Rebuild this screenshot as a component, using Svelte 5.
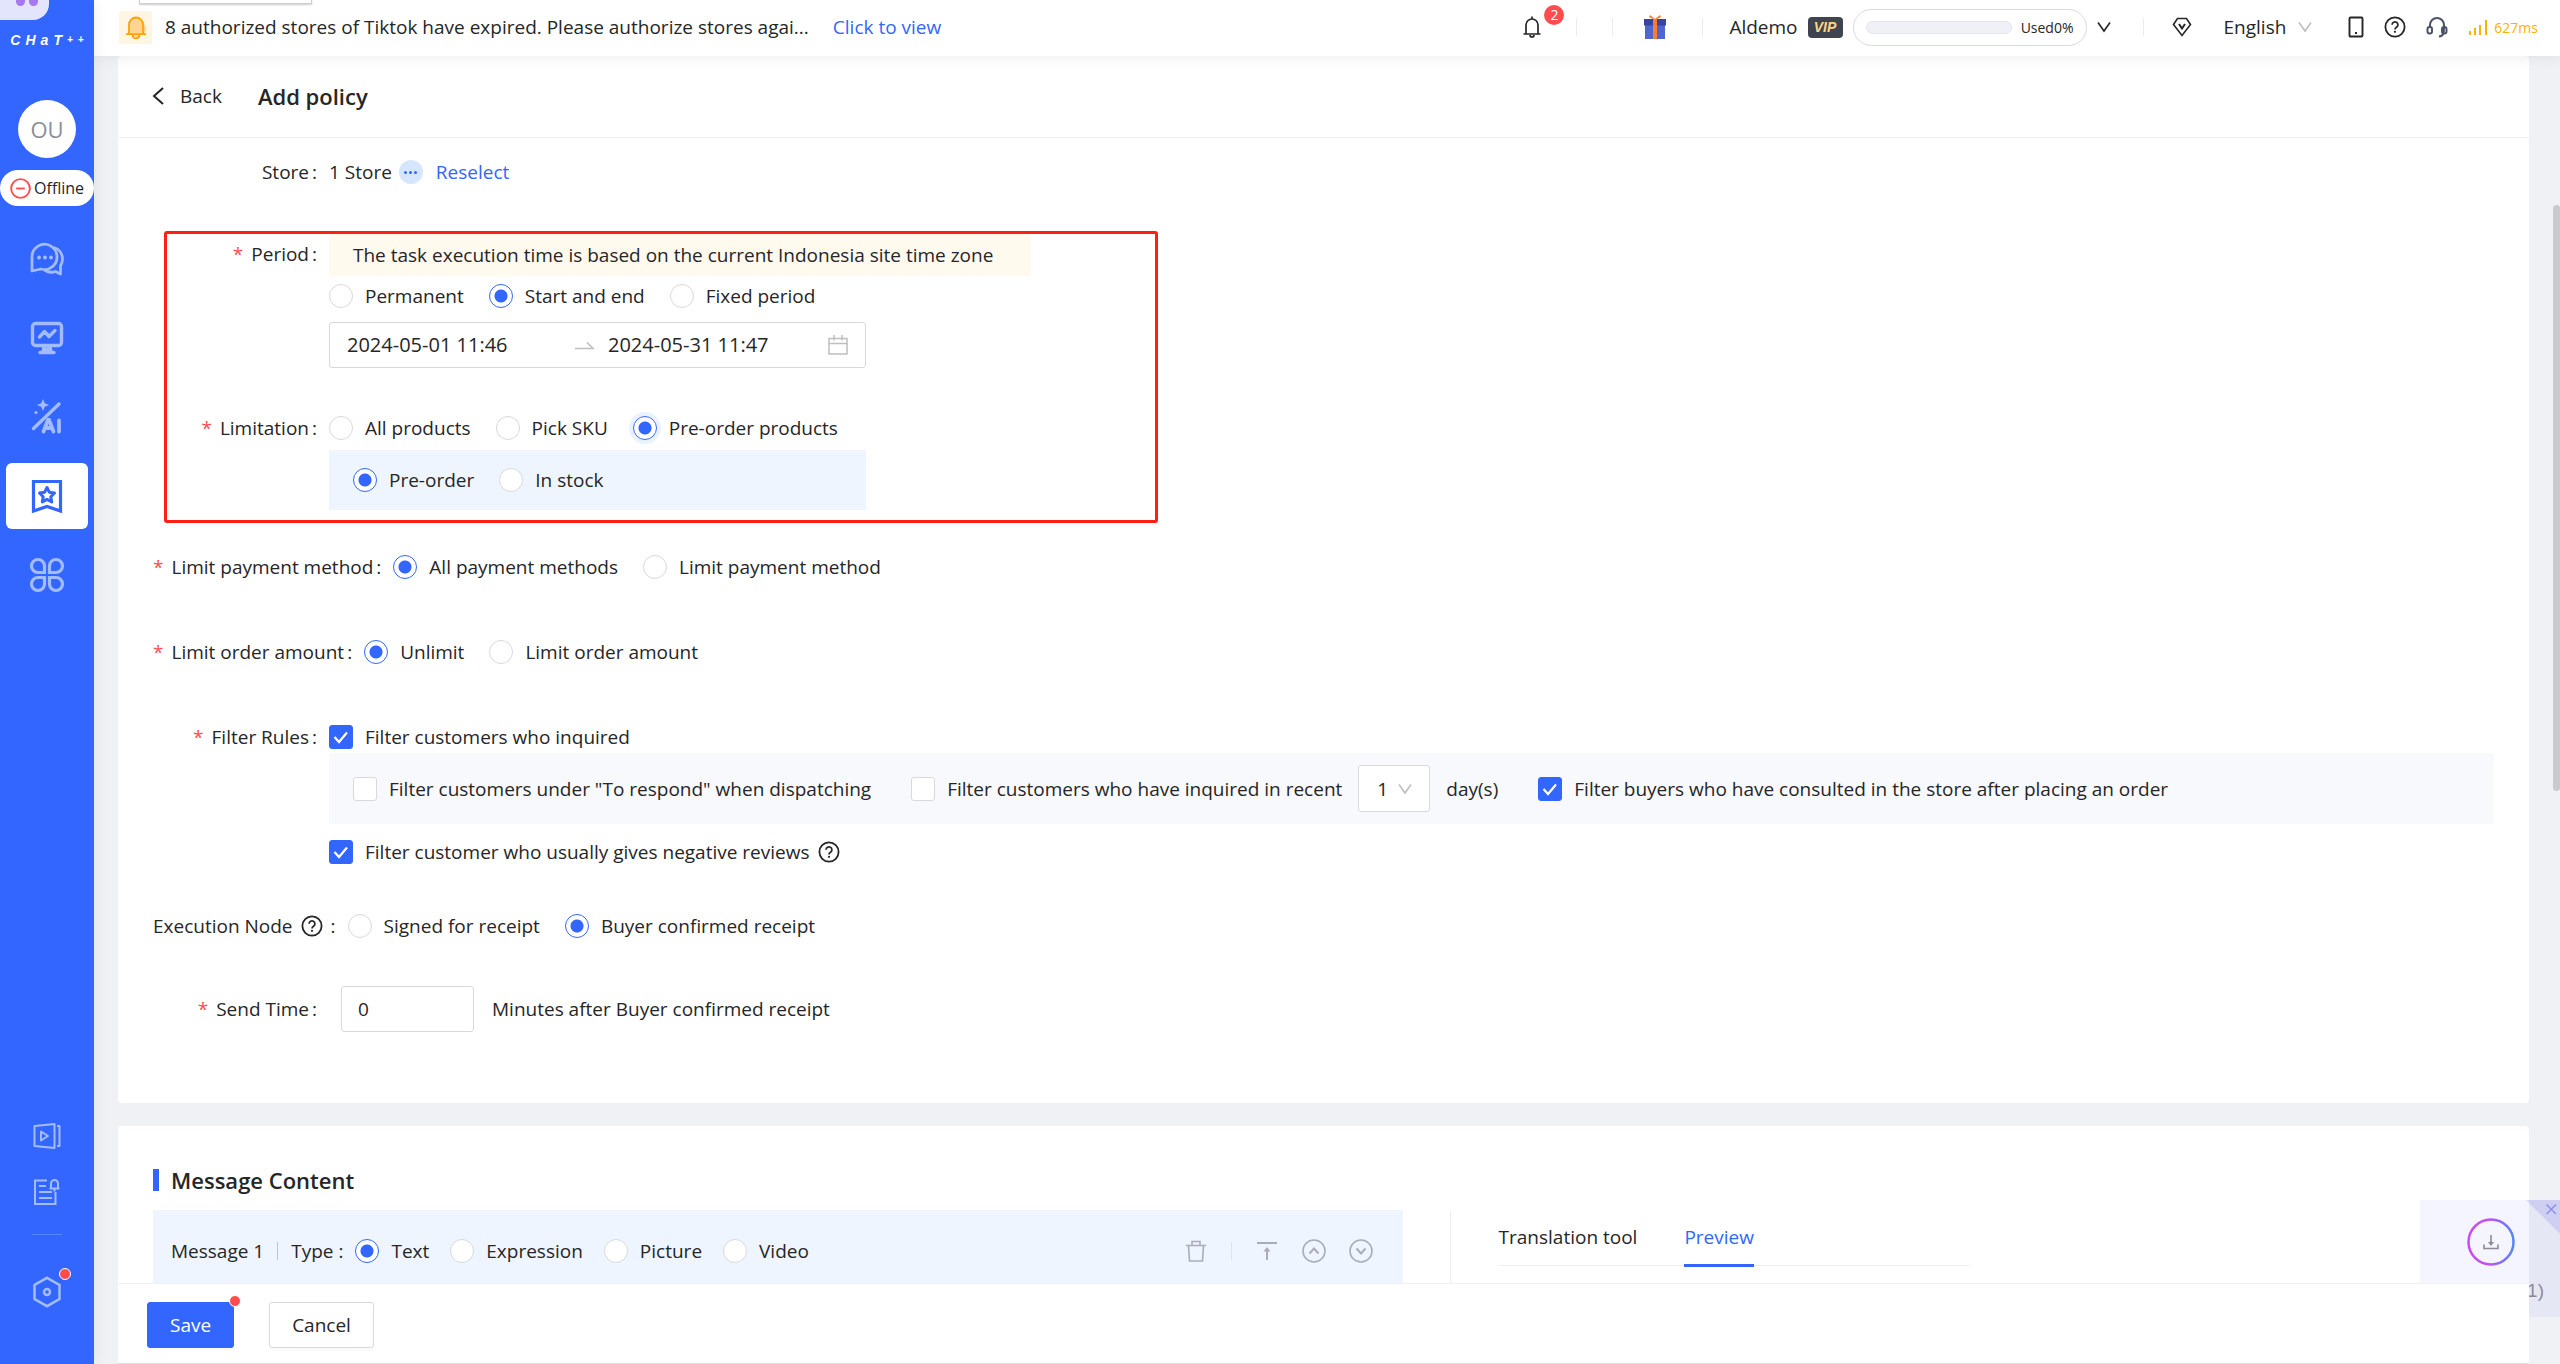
<script lang="ts">
  let period = $state('range');
  let limitation = $state('preorder');
  let stock = $state('preorder');
  let payment = $state('all');
  let amount = $state('unlimit');
  let node = $state('confirmed');
  let messageType = $state('Text');

  let startTime = $state('2024-05-01 11:46');
  let endTime = $state('2024-05-31 11:47');
  let delay = $state('0');
  let days = $state('1');

  let filterInquired = $state(true);
  let filterDispatch = $state(false);
  let filterRecent = $state(false);
  let filterConsulted = $state(true);
  let filterNegative = $state(true);

  const messageTypes = ['Text', 'Expression', 'Picture', 'Video'];
</script>

{#snippet help()}
  <svg class="help" viewBox="0 0 22 22" aria-hidden="true">
    <circle cx="11" cy="11" r="9.6" fill="none" stroke="currentColor" stroke-width="1.8" />
    <path d="M8.1 8.8a2.9 2.9 0 1 1 4.4 2.5c-1 .6-1.5 1.1-1.5 2.1" fill="none" stroke="currentColor" stroke-width="1.7" />
    <circle cx="11" cy="15.8" r="1.1" fill="currentColor" />
  </svg>
{/snippet}

{#snippet chevron()}
  <svg class="chevron" viewBox="0 0 14 12" aria-hidden="true">
    <path d="M1 1.5l6 8.5 6-8.5" fill="none" stroke="currentColor" stroke-width="1.6" />
  </svg>
{/snippet}

<div class="app">
  <aside class="sidebar">
    <div class="mascot"><i></i><i></i></div>
    <div class="logo"><span>C</span><span>H</span><span>a</span><span>T</span><small>+</small><small>+</small></div>
    <div class="avatar">OU</div>
    <button class="status">
      <svg viewBox="0 0 22 22" aria-hidden="true">
        <circle cx="11" cy="11" r="9.8" fill="none" stroke="#ff4d4f" stroke-width="2" />
        <path d="M6.5 11h9" stroke="#ff4d4f" stroke-width="2" />
      </svg>
      Offline
    </button>

    <nav class="menu">
      <a href="#chat" aria-label="Chat">
        <svg viewBox="0 0 36 36" fill="none" stroke="currentColor" stroke-width="2.800" stroke-linejoin="round">
          <path d="M3 30V16a12.500 12.500 0 1 1 19 10.500c-3 2.500-7 2.500-10 1.500z" />
          <path d="M25 6.500c5 1.500 8.500 6 8.500 11.500 0 3-1 5-2 7V33l-5-2.500c-4 1.500-8 .5-11-1.500" />
          <g fill="currentColor" stroke="none"><circle cx="10" cy="16.500" r="1.900" /><circle cx="16" cy="16.500" r="1.900" /><circle cx="22" cy="16.500" r="1.900" /></g>
        </svg>
      </a>
      <a href="#data" aria-label="Data">
        <svg viewBox="0 0 36 36" fill="none" stroke="currentColor" stroke-width="3.400" stroke-linecap="round" stroke-linejoin="round">
          <rect x="3.500" y="3.500" width="29" height="22" rx="3" />
          <path d="M10.500 17l5-5.500 4.500 5 6-6M15 27l-1 5M21 27l1 5M11 32.500h14M15 29h6" />
        </svg>
      </a>
      <a href="#ai" aria-label="AI">
        <svg viewBox="0 0 36 36" fill="none" stroke="currentColor" stroke-width="3.400" stroke-linecap="round">
          <path d="M4.500 29.500L30 5" />
          <path d="M14 0l1.800 4.200L20 6l-4.200 1.800L14 12l-1.800-4.200L8 6l4.200-1.800z" fill="currentColor" stroke="none" />
          <circle cx="7" cy="13.500" r="1.600" fill="currentColor" stroke="none" />
          <path d="M14.500 32.500l4.500-11.500h1L24.500 32.500M17 29h6M30 21.500v11" stroke-width="3.800" />
        </svg>
      </a>
      <a href="#policy" class="active" aria-label="Marketing">
        <svg viewBox="0 0 36 36" fill="none" stroke="currentColor" stroke-width="3.200">
          <path d="M4.500 3.500h27v29.500L18 28.500 4.500 33z" />
          <path d="M18 9.500l2.300 4.700 5.200.8-3.700 3.700.9 5.200-4.700-2.500-4.700 2.500.9-5.200-3.700-3.700 5.200-.8z" stroke-width="3" stroke-linejoin="round" />
        </svg>
      </a>
      <a href="#apps" aria-label="Apps">
        <svg viewBox="0 0 36 36" fill="none" stroke="currentColor" stroke-width="3.200">
          <path d="M9 2.500a6.500 6.500 0 0 1 6.500 6.500v6.500H9a6.500 6.500 0 0 1 0-13zM27 2.500a6.500 6.500 0 0 1 0 13h-6.500V9A6.500 6.500 0 0 1 27 2.500zM9 20.500h6.500V27A6.500 6.500 0 1 1 9 20.500zM20.500 20.500H27a6.500 6.500 0 1 1-6.500 6.500z" />
        </svg>
      </a>
    </nav>

    <div class="tools">
      <a href="#video" aria-label="Tutorials">
        <svg viewBox="0 0 28 28" fill="none" stroke="currentColor" stroke-width="2" stroke-linejoin="round">
          <path d="M1.500 4l20-2v24l-20-2zM24 4h2.500v20H24M8 9.500v9l7-4.500z" />
        </svg>
      </a>
      <a href="#log" aria-label="Log">
        <svg viewBox="0 0 28 28" fill="none" stroke="currentColor" stroke-width="2">
          <path d="M14 2.500H2v23.500h20.500V14M6 8h7M6 14h13M6 20h13M16.500 10.500h10M18 10.500V5.500a3.500 3.500 0 0 1 7 0v5M20.500 12.500h2" />
        </svg>
      </a>
      <hr />
      <a href="#settings" class="settings" aria-label="Settings">
        <svg viewBox="0 0 32 32" fill="none" stroke="currentColor" stroke-width="2.500">
          <path d="M16 1.800l12.500 7.100v14.200L16 30.200 3.500 23.100V8.900z" />
          <circle cx="16" cy="16" r="3" />
        </svg>
        <b class="dot"></b>
      </a>
    </div>
  </aside>

  <div class="main">
    <header class="topbar">
      <div class="drop-edge"></div>
      <div class="notice">
        <span class="bell-tile">
          <svg viewBox="0 0 24 24" aria-hidden="true">
            <path d="M8 19V9.500A6 6 0 0 1 20 9.500c3 2 3 6 0 9z" fill="#ffd591" />
            <path d="M5 19V9.500a7 7 0 0 1 14 0V19M2 19.200h20M8.500 20a3.500 3.500 0 0 0 7 0" fill="#ffd591" stroke="#faa30a" stroke-width="1.800" />
          </svg>
        </span>
        <span class="notice-text">8 authorized stores of Tiktok have expired. Please authorize stores agai...</span>
        <a href="#view">Click to view</a>
      </div>

      <div class="top-actions">
        <button class="bell" aria-label="Notifications">
          <svg viewBox="0 0 20 22" fill="none" stroke="currentColor" stroke-width="1.700">
            <path d="M4 18V9a6 6 0 0 1 12 0v9M1.500 18h17M10 .5v2.500M8 19a2 2 0 0 0 4 0" />
          </svg>
          <b class="count">2</b>
        </button>
        <i class="sep first"></i>
        <i class="sep second"></i>
        <svg class="gift" viewBox="0 0 24 24" aria-hidden="true">
          <path d="M2 10h20v14H2z" fill="#4f66cf" />
          <path d="M1 4h22v6.500H1z" fill="#3a43a0" />
          <path d="M10 4h4v20h-4z" fill="#ff7b2e" />
          <path d="M11 4.500L6 2l1-2 5 4 5-4 1 2-5 2.500z" fill="#ff7b2e" />
        </svg>
        <i class="sep third"></i>
        <span class="user">Aldemo</span>
        <span class="vip">VIP</span>
        <div class="usage"><div class="bar"></div>Used0%</div>
        <button class="icon-btn" aria-label="More">{@render chevron()}</button>
        <i class="sep fourth"></i>
        <svg class="gem" viewBox="0 0 20 20" fill="none" stroke="currentColor" stroke-width="1.600">
          <path d="M5.500 1.500h9l4 6L10 18.500 1.500 7.500z" /><path d="M7 7l3 4.500L13 7" stroke-width="2" />
        </svg>
        <button class="language">English {@render chevron()}</button>
        <svg class="phone" viewBox="0 0 16 22" fill="none" stroke="currentColor" stroke-width="1.900">
          <rect x="1.500" y="1.500" width="13" height="19" rx="1" /><path d="M7 17h2" />
        </svg>
        {@render help()}
        <svg class="headset" viewBox="0 0 22 22" fill="none" stroke="#4a5468" stroke-width="2">
          <path d="M4 12V9a7 7 0 0 1 14 0v3c0 4 0 8-5 8.500" />
          <rect x="1.500" y="11" width="4.500" height="6.500" rx="2" /><rect x="16" y="11" width="4.500" height="6.500" rx="2" />
        </svg>
        <span class="ping">
          <svg viewBox="0 0 20 15" stroke="#ffb100" stroke-width="2" aria-hidden="true">
            <path d="M2 15v-4M7 15V8M12 15V5" /><path d="M18 15V0" />
          </svg>
          627ms
        </span>
      </div>
    </header>

    <div class="content">
      <section class="panel">
        <div class="page-head">
          <button class="back">
            <svg viewBox="0 0 12 18" fill="none" stroke="currentColor" stroke-width="2"><path d="M11 1L2 9l9 8" /></svg>
            Back
          </button>
          <h1>Add policy</h1>
        </div>

        <form class="form">
          <div class="row">
            <span class="label">Store<i class="colon">:</i></span>
            <div class="inline">
              1 Store
              <button type="button" class="more" aria-label="Show stores"><i></i><i></i><i></i></button>
              <a href="#stores">Reselect</a>
            </div>
          </div>

          <div class="marked">
            <div class="row tall">
              <span class="label required">Period<i class="colon">:</i></span>
              <div class="field">
                <p class="banner">The task execution time is based on the current Indonesia site time zone</p>
                <div class="options">
                  <label><input type="radio" value="permanent" bind:group={period} />Permanent</label>
                  <label><input type="radio" value="range" bind:group={period} />Start and end</label>
                  <label><input type="radio" value="fixed" bind:group={period} />Fixed period</label>
                </div>
                <div class="range">
                  <input type="text" aria-label="Start time" bind:value={startTime} />
                  <svg class="arrow" viewBox="0 0 20 10" fill="none" stroke="currentColor" stroke-width="1.600"><path d="M0 8.500h18l-6-6" /></svg>
                  <input type="text" aria-label="End time" bind:value={endTime} />
                  <svg class="calendar" viewBox="0 0 20 20" fill="none" stroke="currentColor" stroke-width="1.500">
                    <path d="M1 3.500h18V19H1zM1 8.500h18M6 0v5.500M14 0v5.500" />
                  </svg>
                </div>
              </div>
            </div>

            <div class="row tall limitation">
              <span class="label required">Limitation<i class="colon">:</i></span>
              <div class="field">
                <div class="options">
                  <label><input type="radio" value="all" bind:group={limitation} />All products</label>
                  <label><input type="radio" value="sku" bind:group={limitation} />Pick SKU</label>
                  <label><input type="radio" class="focused" value="preorder" bind:group={limitation} />Pre-order products</label>
                </div>
                <div class="options nested">
                  <label><input type="radio" value="preorder" bind:group={stock} />Pre-order</label>
                  <label><input type="radio" value="instock" bind:group={stock} />In stock</label>
                </div>
              </div>
            </div>
          </div>

          <div class="row payment">
            <span class="label required">Limit payment method<i class="colon">:</i></span>
            <div class="options">
              <label><input type="radio" value="all" bind:group={payment} />All payment methods</label>
              <label><input type="radio" value="limit" bind:group={payment} />Limit payment method</label>
            </div>
          </div>

          <div class="row spaced">
            <span class="label required">Limit order amount<i class="colon">:</i></span>
            <div class="options">
              <label><input type="radio" value="unlimit" bind:group={amount} />Unlimit</label>
              <label><input type="radio" value="limit" bind:group={amount} />Limit order amount</label>
            </div>
          </div>

          <div class="row spaced">
            <span class="label required">Filter Rules<i class="colon">:</i></span>
            <div class="field grow">
              <div class="options">
                <label><input type="checkbox" bind:checked={filterInquired} />Filter customers who inquired</label>
              </div>
              <div class="filters">
                <label><input type="checkbox" bind:checked={filterDispatch} />Filter customers under "To respond" when dispatching</label>
                <div class="recent">
                  <label><input type="checkbox" bind:checked={filterRecent} />Filter customers who have inquired in recent</label>
                  <span class="select">
                    <select aria-label="Days" bind:value={days}>
                      <option>1</option>
                      <option>3</option>
                      <option>7</option>
                    </select>
                    {@render chevron()}
                  </span>
                  <span>day(s)</span>
                </div>
                <label><input type="checkbox" bind:checked={filterConsulted} />Filter buyers who have consulted in the store after placing an order</label>
              </div>
              <div class="options negative">
                <label><input type="checkbox" bind:checked={filterNegative} />Filter customer who usually gives negative reviews</label>
                {@render help()}
              </div>
            </div>
          </div>

          <div class="row node">
            <span class="label with-help">Execution Node {@render help()} <span>:</span></span>
            <div class="options">
              <label><input type="radio" value="signed" bind:group={node} />Signed for receipt</label>
              <label><input type="radio" value="confirmed" bind:group={node} />Buyer confirmed receipt</label>
            </div>
          </div>

          <div class="row send">
            <label class="label required" for="delay">Send Time<i class="colon">:</i></label>
            <input id="delay" class="delay" type="text" bind:value={delay} />
            <span>Minutes after Buyer confirmed receipt</span>
          </div>
        </form>
      </section>

      <section class="panel message">
        <h2>Message Content</h2>
        <div class="columns">
          <div class="message-head">
            <span>Message 1</span>
            <i class="bar-sep"></i>
            <span class="type">Type :</span>
            <div class="options types">
              {#each messageTypes as type}
                <label><input type="radio" value={type} bind:group={messageType} />{type}</label>
              {/each}
            </div>
            <div class="message-tools">
              <button aria-label="Delete">
                <svg viewBox="0 0 24 24" fill="none" stroke="currentColor" stroke-width="1.600"><path d="M2 6.500h20M4.500 6.500l1 15.500h13l1-15.500M8 6V2.500h8V6" /></svg>
              </button>
              <i class="bar-sep light"></i>
              <button aria-label="Move to top">
                <svg viewBox="0 0 24 24" fill="none" stroke="currentColor" stroke-width="2"><path d="M2 4h20M12 21V9" /><path d="M8.500 12.500L12 8l3.500 4.500z" fill="currentColor" stroke="none" /></svg>
              </button>
              <button aria-label="Move up">
                <svg viewBox="0 0 24 24" fill="none" stroke="currentColor" stroke-width="1.600"><circle cx="12" cy="12" r="11" /><path d="M7.500 14.500l4.500-5 4.500 5" stroke-width="2" /></svg>
              </button>
              <button aria-label="Move down">
                <svg viewBox="0 0 24 24" fill="none" stroke="currentColor" stroke-width="1.600"><circle cx="12" cy="12" r="11" /><path d="M7.500 9.500l4.500 5 4.500-5" stroke-width="2" /></svg>
              </button>
            </div>
          </div>
          <div class="side">
            <div class="tabs">
              <button>Translation tool</button>
              <button class="current">Preview</button>
            </div>
          </div>
        </div>
      </section>
    </div>

    <div class="download">
      <svg class="ring" viewBox="0 0 48 48" fill="none" aria-hidden="true">
        <defs>
          <linearGradient id="ring" x1="0" y1="0" x2="1" y2="0">
            <stop offset="0.4" stop-color="#c84cf2" />
            <stop offset="1" stop-color="#5585ff" />
          </linearGradient>
        </defs>
        <circle cx="24" cy="24" r="22.500" stroke="url(#ring)" stroke-width="2.500" />
        <path d="M17 26.500v4h14v-4M24 17v9" stroke="#8b8b98" stroke-width="1.600" />
        <path d="M21 24h6l-3 4z" fill="#8b8b98" />
      </svg>
      <button class="close" aria-label="Close">
        <svg viewBox="0 0 34 34" fill="none">
          <path d="M0 0h34v34z" fill="#6a6ae6" fill-opacity="0.180" />
          <path d="M20.500 4.500l9.500 9.500M30 4.500L20.500 14" stroke="#8d8df0" stroke-width="1.400" />
        </svg>
      </button>
      <span class="total">1)</span>
    </div>

    <div class="scrollbar"></div>

    <footer class="footer">
      <button class="primary">Save<b class="dot"></b></button>
      <button>Cancel</button>
    </footer>
  </div>
</div>

<style>
  :global(body) {
    margin: 0;
    font-family: 'Open Sans', 'Noto Sans', sans-serif;
    font-size: 19px;
    color: #262626;
  }

  .app {
    display: flex;
    height: 100vh;
    overflow: hidden;
    background: #f0f1f5;
  }

  * {
    box-sizing: border-box;
  }

  button {
    font: inherit;
    color: inherit;
    background: none;
    border: none;
    padding: 0;
    cursor: pointer;
  }

  a {
    color: #3366ff;
    text-decoration: none;
  }

  svg {
    display: block;
    flex: none;
  }

  .help {
    width: 22px;
    height: 22px;
  }

  .chevron {
    width: 14px;
    height: 12px;
  }

  /* sidebar */
  .sidebar {
    position: relative;
    z-index: 3;
    flex: none;
    width: 94px;
    display: flex;
    flex-direction: column;
    align-items: center;
    background: #3366ff;
    box-shadow: 2px 0 12px rgba(0, 0, 0, 0.06);
  }

  .mascot {
    align-self: flex-start;
    display: flex;
    justify-content: center;
    gap: 4px;
    width: 49px;
    height: 20px;
    padding-left: 5px;
    overflow: hidden;
    background: #e2e5fb;
    border-bottom-right-radius: 16px;
  }

  .mascot i {
    width: 9px;
    height: 6px;
    background: #a878f0;
    border-radius: 0 0 5px 5px;
  }

  .logo {
    display: flex;
    align-items: center;
    gap: 5px;
    margin-top: 9px;
    font: italic bold 14px/22px 'Liberation Sans', sans-serif;
    color: #fff;
  }

  .logo small {
    font-size: 10px;
  }

  .avatar {
    width: 58px;
    height: 58px;
    margin-top: 49px;
    border-radius: 50%;
    background: #fff;
    color: #8a8e99;
    font-size: 22px;
    line-height: 58px;
    text-align: center;
  }

  .status {
    display: flex;
    align-items: center;
    justify-content: center;
    gap: 3px;
    width: 94px;
    height: 36px;
    margin-top: 12px;
    border-radius: 18px;
    background: #fff;
    font-size: 16px;
  }

  .status svg {
    width: 21px;
    height: 21px;
  }

  .menu {
    display: flex;
    flex-direction: column;
    align-items: center;
    gap: 13px;
    margin-top: 20px;
  }

  .menu a {
    display: flex;
    align-items: center;
    justify-content: center;
    width: 82px;
    height: 66px;
    color: #a3bcff;
    border-radius: 6px;
  }

  .menu a.active {
    background: #fff;
    color: #3366ff;
  }

  .menu svg {
    width: 36px;
    height: 36px;
  }

  .tools {
    display: flex;
    flex-direction: column;
    align-items: center;
    margin-top: auto;
    padding-bottom: 56px;
    gap: 28px;
  }

  .tools a {
    position: relative;
    color: #a3bcff;
  }

  .tools svg {
    width: 28px;
    height: 28px;
  }

  .tools .settings svg {
    width: 32px;
    height: 32px;
  }

  .tools hr {
    width: 30px;
    margin: 0 0 13px;
    border: none;
    border-top: 1px solid #5b84ff;
  }

  .dot {
    position: absolute;
    top: -8px;
    right: -8px;
    width: 12px;
    height: 12px;
    border: 1px solid #fff;
    border-radius: 50%;
    background: #ff4d4f;
  }

  /* top bar */
  .main {
    position: relative;
    flex: 1;
    min-width: 0;
    display: flex;
    flex-direction: column;
  }

  .topbar {
    position: relative;
    z-index: 2;
    flex: none;
    display: flex;
    align-items: center;
    justify-content: space-between;
    height: 56px;
    padding: 0 22px 2px 25px;
    background: #fff;
    box-shadow: 0 2px 14px rgba(0, 0, 0, 0.07);
  }

  .drop-edge {
    position: absolute;
    top: 0;
    left: 45px;
    width: 173px;
    height: 4px;
    border: 1px solid #d0d0d0;
    border-top: none;
    box-shadow: 0 1px 2px rgba(0, 0, 0, 0.2);
  }

  .notice {
    display: flex;
    align-items: center;
  }

  .bell-tile {
    display: flex;
    align-items: center;
    justify-content: center;
    width: 33px;
    height: 33px;
    margin-right: 13px;
    border-radius: 3px;
    background: #fff5e3;
  }

  .bell-tile svg {
    width: 24px;
    height: 24px;
  }

  .notice a {
    margin-left: 24px;
  }

  .top-actions {
    display: flex;
    align-items: center;
  }

  .bell {
    position: relative;
  }

  .bell svg {
    width: 20px;
    height: 22px;
  }

  .count {
    position: absolute;
    top: -11px;
    left: 22px;
    width: 20px;
    height: 20px;
    border-radius: 50%;
    background: #ff4d4f;
    color: #fff;
    font-size: 14px;
    font-weight: 400;
    line-height: 20px;
    text-align: center;
  }

  .sep {
    width: 1px;
    height: 18px;
    background: #ececec;
  }

  .sep.first {
    margin-left: 34px;
  }

  .sep.second {
    margin: 0 30px 0 35px;
  }

  .sep.third {
    margin: 0 26px 0 35px;
  }

  .sep.fourth {
    margin: 0 28px 0 32px;
  }

  .gift {
    width: 24px;
    height: 24px;
  }

  .vip {
    width: 35px;
    height: 21px;
    margin: 0 10px;
    border-radius: 4px;
    background: #3f4450;
    color: #ffd48a;
    font: italic bold 14px/21px 'Liberation Sans', sans-serif;
    text-align: center;
  }

  .usage {
    display: flex;
    align-items: center;
    justify-content: space-between;
    width: 234px;
    height: 37px;
    margin-right: 10px;
    padding: 0 12px;
    border: 1px solid #d6dae6;
    border-radius: 19px;
    font-size: 14px;
  }

  .bar {
    width: 146px;
    height: 13px;
    border: 1px solid #e3e4f0;
    border-radius: 7px;
    background: #f0f1f6;
  }

  .gem {
    width: 20px;
    height: 20px;
  }

  .language {
    display: flex;
    align-items: center;
    gap: 12px;
    margin: 0 36px 0 32px;
  }

  .language .chevron {
    color: #bfbfbf;
  }

  .phone {
    width: 16px;
    height: 22px;
    margin-right: 20px;
  }

  .headset {
    width: 22px;
    height: 22px;
    margin: 0 20px;
  }

  .ping {
    display: flex;
    align-items: center;
    gap: 6px;
    color: #ffb100;
    font-size: 14px;
  }

  .ping svg {
    width: 20px;
    height: 15px;
  }

  /* page */
  .content {
    flex: 1;
    min-height: 0;
    overflow: hidden;
    padding: 0 31px 0 24px;
  }

  .panel {
    background: #fff;
    border-radius: 4px;
  }

  .page-head {
    display: flex;
    align-items: center;
    height: 82px;
    padding: 0 0 2px 34px;
    border-bottom: 1px solid #f0f0f0;
  }

  .back {
    display: flex;
    align-items: center;
    gap: 16px;
    margin-right: 36px;
  }

  .back svg {
    width: 12px;
    height: 18px;
  }

  h1,
  h2 {
    margin: 0;
    font-size: 22px;
    font-weight: 600;
  }

  .form {
    padding: 18px 35px 71px;
  }

  .row {
    display: flex;
    align-items: flex-start;
    line-height: 32px;
  }

  .row.tall {
    line-height: 40px;
  }

  .label {
    flex: none;
    min-width: 176px;
    padding-right: 12px;
    text-align: right;
    white-space: nowrap;
  }

  .required::before {
    content: '*';
    margin-right: 8px;
    color: #ff4d4f;
  }

  .colon {
    margin-left: 3px;
    font-style: normal;
  }

  .with-help {
    display: flex;
    align-items: center;
    gap: 8px;
  }

  .inline,
  .options,
  .recent {
    display: flex;
    align-items: center;
  }

  .inline {
    gap: 7px;
  }

  .inline a {
    margin-left: 6px;
  }

  .more {
    display: flex;
    align-items: center;
    justify-content: center;
    gap: 2px;
    width: 24px;
    height: 24px;
    border-radius: 50%;
    background: #d6e6ff;
  }

  .more i {
    width: 3px;
    height: 3px;
    border-radius: 50%;
    background: #3366ff;
  }

  .options {
    gap: 25px;
  }

  .options.types {
    gap: 21px;
  }

  label:not(.label) {
    display: flex;
    align-items: center;
    gap: 12px;
    white-space: nowrap;
  }

  input[type='radio'],
  input[type='checkbox'] {
    appearance: none;
    flex: none;
    width: 24px;
    height: 24px;
    margin: 0;
    border: 1px solid #d9d9d9;
    background: #fff;
  }

  input[type='radio'] {
    border-radius: 50%;
  }

  input[type='radio']:checked {
    border-color: #3366ff;
    background: radial-gradient(circle, #3366ff 6px, #fff 7px);
  }

  input.focused:checked {
    box-shadow: 0 0 0 4px #ebf2ff;
  }

  input[type='checkbox'] {
    border-radius: 3px;
  }

  input[type='checkbox']:checked {
    border-color: #3366ff;
    background: #3366ff
      url("data:image/svg+xml,%3Csvg xmlns='http://www.w3.org/2000/svg' viewBox='0 0 22 22'%3E%3Cpath d='M4.500 11l4.500 5 8-9.500' fill='none' stroke='white' stroke-width='2.200'/%3E%3C/svg%3E");
  }

  .marked {
    position: relative;
    margin-top: 46px;
  }

  .marked::after {
    content: '';
    position: absolute;
    top: -3px;
    bottom: -13px;
    left: 11px;
    width: 994px;
    box-sizing: border-box;
    border: 3px solid #ff1f14;
    border-radius: 3px;
    pointer-events: none;
  }

  .banner {
    width: 702px;
    margin: 0;
    padding: 0 24px;
    background: #fff9ee;
    line-height: 42px;
    white-space: nowrap;
  }

  .range {
    display: flex;
    align-items: center;
    width: 537px;
    height: 46px;
    margin-top: 6px;
    padding: 0 17px;
    border: 1px solid #d9d9d9;
    border-radius: 3px;
    color: #bfbfbf;
    font-size: 20px;
  }

  .range input {
    width: 228px;
    padding: 0;
    border: none;
    outline: none;
    font: inherit;
    color: #262626;
  }

  .range input:last-of-type {
    flex: 1;
    min-width: 0;
    margin-left: 13px;
  }

  .arrow {
    width: 20px;
    height: 10px;
  }

  .calendar {
    width: 20px;
    height: 20px;
  }

  .limitation {
    margin-top: 40px;
  }

  .nested {
    width: 537px;
    height: 60px;
    margin-top: 2px;
    padding: 0 24px;
    background: #eef5ff;
  }

  .payment {
    margin-top: 41px;
  }

  .spaced {
    margin-top: 53px;
  }

  .grow {
    flex: 1;
    min-width: 0;
  }

  .filters {
    display: flex;
    align-items: center;
    gap: 40px;
    height: 71px;
    padding: 0 24px;
    background: #f8f9fc;
  }

  .recent {
    gap: 16px;
  }

  .select {
    position: relative;
    color: #bfbfbf;
  }

  .select select {
    appearance: none;
    display: block;
    width: 72px;
    height: 47px;
    padding: 0 18px;
    border: 1px solid #d9d9d9;
    border-radius: 3px;
    background: #fff;
    color: #262626;
    font: inherit;
  }

  .select .chevron {
    position: absolute;
    top: 18px;
    right: 18px;
    pointer-events: none;
  }

  .negative {
    gap: 8px;
    margin-top: 12px;
  }

  .node {
    margin-top: 42px;
  }

  .send {
    align-items: center;
    margin-top: 44px;
  }

  .delay {
    width: 133px;
    height: 46px;
    margin: 0 18px 0 12px;
    padding: 0 16px;
    border: 1px solid #d9d9d9;
    border-radius: 3px;
    font: inherit;
    color: inherit;
  }

  /* message */
  .message {
    margin-top: 23px;
    padding: 43px 35px 0;
  }

  h2 {
    padding-left: 12px;
    border-left: 6px solid #3366ff;
    line-height: 22px;
  }

  .columns {
    display: grid;
    grid-template-columns: 1249fr 1044fr;
    gap: 47px;
    margin-top: 19px;
  }

  .message-head {
    display: flex;
    align-items: center;
    height: 82px;
    padding: 0 30px 0 18px;
    background: #eef5ff;
  }

  .bar-sep {
    width: 1px;
    height: 18px;
    margin: 0 13px;
    background: #bfc4cf;
  }

  .bar-sep.light {
    margin: 0;
    background: #dfe3ea;
  }

  .type {
    margin-right: 12px;
  }

  .message-tools {
    display: flex;
    align-items: center;
    gap: 23px;
    margin-left: auto;
    color: #a9adb8;
  }

  .message-tools svg {
    width: 24px;
    height: 24px;
  }

  .side {
    padding-left: 48px;
    border-left: 1px solid #eeeeee;
  }

  .tabs {
    display: flex;
    gap: 47px;
    width: 470px;
    height: 56px;
    border-bottom: 1px solid #eeeeee;
  }

  .tabs button {
    height: 57px;
    border-bottom: 3px solid transparent;
  }

  .tabs .current {
    border-color: #3366ff;
    color: #3366ff;
    font-weight: 500;
  }

  /* overlays */
  .download {
    position: absolute;
    right: 0;
    bottom: 47px;
    width: 140px;
    height: 117px;
    background: rgba(80, 90, 255, 0.06);
  }

  .ring {
    width: 48px;
    height: 48px;
    margin: 18px 0 0 47px;
  }

  .close {
    position: absolute;
    top: 0;
    right: 0;
  }

  .close svg {
    width: 34px;
    height: 34px;
  }

  .total {
    position: absolute;
    right: 16px;
    bottom: 14px;
    color: #8b8b98;
    font: 19px/24px 'Liberation Sans', sans-serif;
  }

  .scrollbar {
    position: absolute;
    top: 15%;
    right: 0;
    width: 7px;
    height: 43%;
    border-radius: 4px;
    background: #c9cacd;
  }

  .footer {
    position: relative;
    z-index: 1;
    flex: none;
    display: flex;
    align-items: center;
    gap: 35px;
    height: 81px;
    margin: 0 31px 0 24px;
    padding: 2px 29px 0;
    border-top: 1px solid #f0f0f0;
    border-bottom: 1px solid #dcdae6;
    background: #fff;
  }

  .footer button {
    position: relative;
    height: 46px;
    padding: 0 22px;
    border: 1px solid #d9d9d9;
    border-radius: 3px;
    box-shadow: 0 3px 0 rgba(0, 0, 0, 0.02);
  }

  .footer .primary {
    border-color: #3366ff;
    background: #3366ff;
    color: #fff;
  }
</style>
